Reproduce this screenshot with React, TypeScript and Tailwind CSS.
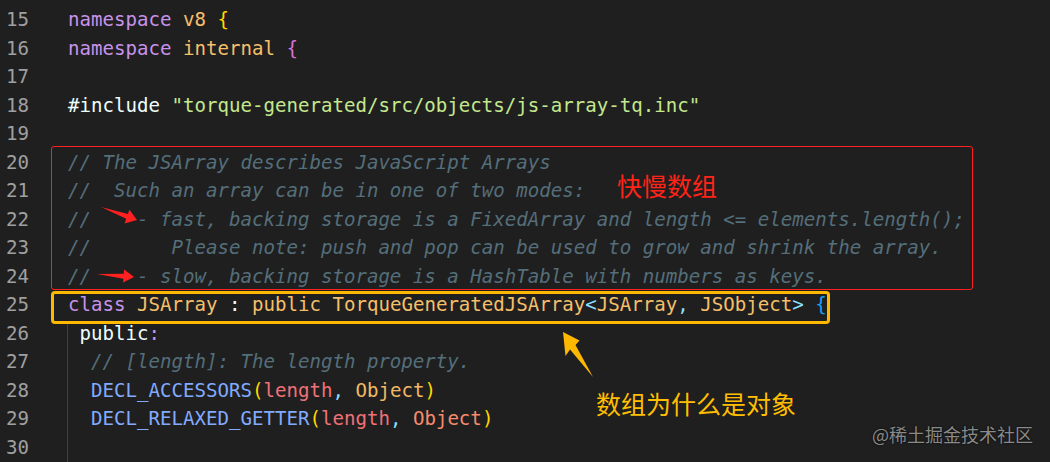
import React from "react";

type Tok = [string, string, boolean?];

const K = "#c792ea";
const Y = "#f5bf6a";
const W = "#eeffff";
const S = "#c3e88d";
const C = "#546e7a";
const B = "#82aaff";
const R = "#f07178";
const P = "#89ddff";
const G = "#ffd700";

const lines: { n: number; toks: Tok[] }[] = [
  { n: 15, toks: [["namespace ", K], ["v8 ", Y], ["{", G]] },
  { n: 16, toks: [["namespace ", K], ["internal ", Y], ["{", "#da70d6"]] },
  { n: 17, toks: [] },
  { n: 18, toks: [["#include ", W], ['"torque-generated/src/objects/js-array-tq.inc"', S]] },
  { n: 19, toks: [] },
  { n: 20, toks: [["// The JSArray describes JavaScript Arrays", C, true]] },
  { n: 21, toks: [["//  Such an array can be in one of two modes:", C, true]] },
  { n: 22, toks: [["//    - fast, backing storage is a FixedArray and length <= elements.length();", C, true]] },
  { n: 23, toks: [["//       Please note: push and pop can be used to grow and shrink the array.", C, true]] },
  { n: 24, toks: [["//    - slow, backing storage is a HashTable with numbers as keys.", C, true]] },
  {
    n: 25,
    toks: [
      ["class ", K],
      ["JSArray ", Y],
      [": ", W],
      ["public ", Y],
      ["TorqueGeneratedJSArray", Y],
      ["<", P],
      ["JSArray", Y],
      [", ", P],
      ["JSObject", Y],
      [">", P],
      [" {", "#179fff"],
    ],
  },
  { n: 26, toks: [[" public", W], [":", K]] },
  { n: 27, toks: [["  // [length]: The length property.", C, true]] },
  {
    n: 28,
    toks: [
      ["  DECL_ACCESSORS", B],
      ["(", G],
      ["length", R],
      [", ", P],
      ["Object", "#f2b866"],
      [")", G],
    ],
  },
  {
    n: 29,
    toks: [
      ["  DECL_RELAXED_GETTER", B],
      ["(", G],
      ["length", R],
      [", ", P],
      ["Object", "#f78c6c"],
      [")", G],
    ],
  },
  { n: 30, toks: [] },
];

export default function App() {
  return (
    <div
      className="relative w-[1050px] h-[462px] overflow-hidden bg-[#1f1f1f] pt-[6px]"
      style={{ fontFamily: '"DejaVu Sans Mono", "Liberation Mono", monospace' }}
    >
      {lines.map((l) => (
        <div key={l.n} className="flex h-[28.5px] items-center text-[19.1px] leading-[28.5px]">
          <div className="w-[29px] text-right text-[#a0a0a0]">{l.n}</div>
          <div className="ml-[39px] whitespace-pre">
            {l.toks.map((t, i) => (
              <span key={i} className={t[2] ? "italic" : ""} style={{ color: t[1] }}>
                {t[0]}
              </span>
            ))}
          </div>
        </div>
      ))}

      {/* indent guide */}
      <div className="absolute left-[67px] top-[324px] h-[140px] w-px bg-[#404040]" />

      {/* red box */}
      <div className="absolute left-[51px] top-[146px] h-[144px] w-[922px] rounded-[3px] border border-[#ff2020]" />

      {/* yellow box */}
      <div className="absolute left-[51px] top-[291px] h-[33px] w-[779px] rounded-[4px] border-[3px] border-[#ffb800]" />

      {/* annotations */}
      <div
        className="absolute left-[617px] top-[168px] text-[25px] leading-[34px] text-[#ff2418]"
        style={{ fontFamily: '"Noto Sans CJK SC", sans-serif' }}
      >
        快慢数组
      </div>
      <div
        className="absolute left-[596px] top-[386px] text-[25px] leading-[34px] text-[#ffbe00]"
        style={{ fontFamily: '"Noto Sans CJK SC", sans-serif' }}
      >
        数组为什么是对象
      </div>
      <div
        className="absolute left-[872px] top-[421px] text-[18px] leading-[26px] text-[#8a8a8a]"
        style={{ fontFamily: '"Noto Sans CJK SC", sans-serif', textShadow: "0 0 2px #000" }}
      >
        @稀土掘金技术社区
      </div>

      {/* arrows */}
      <svg className="pointer-events-none absolute left-0 top-0" width="1050" height="462">
        <polygon
          points="101,207 127.9,214 129.4,209.8 137,220 124.6,223.5 126.2,218.8"
          fill="#ff2020"
        />
        <polygon
          points="97,274 123.8,273.7 124.1,269.5 134,277 123.1,282.5 123.4,278.7"
          fill="#ff2020"
        />
        <polygon
          points="563,332 579.5,340.5 575.5,345 593,377 570,349.5 565.5,356"
          fill="#ffb800"
        />
      </svg>
    </div>
  );
}
